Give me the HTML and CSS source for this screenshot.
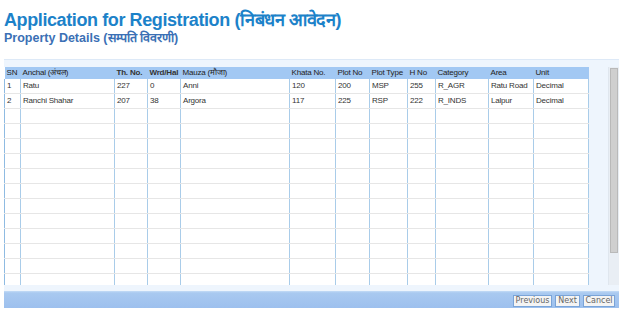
FILE: index.html
```html
<!DOCTYPE html>
<html lang="en">
<head>
    <meta charset="UTF-8">
    <title>Application for Registration</title>
    <link rel="stylesheet" href="styles.css">
</head>
<body>
    <div class="page-head">
        <h1>Application for Registration (निबंधन आवेदन)</h1>
        <h2>Property Details (सम्पति विवरणी)</h2>
    </div>
    <div class="panel">
        <div class="grid-area">
            <div class="grid">
                <table>
                    <colgroup>
                        <col style="width:16px"><col style="width:94px"><col style="width:33px"><col style="width:33px">
                        <col style="width:109px"><col style="width:46px"><col style="width:34px"><col style="width:38px">
                        <col style="width:28px"><col style="width:53px"><col style="width:45px"><col style="width:55px">
                    </colgroup>
                    <thead>
                        <tr>
                            <th>SN</th><th>Anchal (अंचल)</th><th class="bold">Th. No.</th><th class="bold">Wrd/Hal</th>
                            <th>Mauza (मौजा)</th><th>Khata No.</th><th>Plot No</th><th>Plot Type</th>
                            <th>H No</th><th>Category</th><th>Area</th><th>Unit</th>
                        </tr>
                    </thead>
                    <tbody>
                        <tr><td>1</td><td>Ratu</td><td>227</td><td>0</td><td>Anni</td><td>120</td><td>200</td><td>MSP</td><td>255</td><td>R_AGR</td><td>Ratu Road</td><td>Decimal</td></tr>
                        <tr><td>2</td><td>Ranchi Shahar</td><td>207</td><td>38</td><td>Argora</td><td>117</td><td>225</td><td>RSP</td><td>222</td><td>R_INDS</td><td>Lalpur</td><td>Decimal</td></tr>
                        <tr><td></td><td></td><td></td><td></td><td></td><td></td><td></td><td></td><td></td><td></td><td></td><td></td></tr>
                        <tr><td></td><td></td><td></td><td></td><td></td><td></td><td></td><td></td><td></td><td></td><td></td><td></td></tr>
                        <tr><td></td><td></td><td></td><td></td><td></td><td></td><td></td><td></td><td></td><td></td><td></td><td></td></tr>
                        <tr><td></td><td></td><td></td><td></td><td></td><td></td><td></td><td></td><td></td><td></td><td></td><td></td></tr>
                        <tr><td></td><td></td><td></td><td></td><td></td><td></td><td></td><td></td><td></td><td></td><td></td><td></td></tr>
                        <tr><td></td><td></td><td></td><td></td><td></td><td></td><td></td><td></td><td></td><td></td><td></td><td></td></tr>
                        <tr><td></td><td></td><td></td><td></td><td></td><td></td><td></td><td></td><td></td><td></td><td></td><td></td></tr>
                        <tr><td></td><td></td><td></td><td></td><td></td><td></td><td></td><td></td><td></td><td></td><td></td><td></td></tr>
                        <tr><td></td><td></td><td></td><td></td><td></td><td></td><td></td><td></td><td></td><td></td><td></td><td></td></tr>
                        <tr><td></td><td></td><td></td><td></td><td></td><td></td><td></td><td></td><td></td><td></td><td></td><td></td></tr>
                        <tr><td></td><td></td><td></td><td></td><td></td><td></td><td></td><td></td><td></td><td></td><td></td><td></td></tr>
                        <tr><td></td><td></td><td></td><td></td><td></td><td></td><td></td><td></td><td></td><td></td><td></td><td></td></tr>
                    </tbody>
                </table>
            </div>
            <div class="scroll-track"><div class="scroll-thumb"></div></div>
        </div>
        <div class="button-bar">
            <button class="btn-prev">Previous</button>
            <button class="btn-next">Next</button>
            <button class="btn-cancel">Cancel</button>
        </div>
    </div>
</body>
</html>
```

FILE: styles.css
```css
body {
    margin: 0;
    font-family: "Liberation Sans", Arial, sans-serif;
    background-color: #fff;
}
.page-head {
    padding: 9px 4px 0;
}
h1 {
    margin: 0;
    font-size: 18px;
    letter-spacing: -0.4px;
    line-height: 22px;
    font-weight: bold;
    color: #1c82c9;
}
h2 {
    margin: 0;
    font-size: 12.5px;
    line-height: 15px;
    font-weight: bold;
    color: #3b70b5;
}
.panel {
    margin: 13px 7px 0 4px;
    background-color: #eef5fd;
    border-top: 1px solid #dde9f7;
}
.grid-area {
    display: flex;
    padding: 7px 0 6px 0;
}
.grid {
    width: 585px;
    height: 218px;
    overflow: hidden;
    background-color: #fff;
}
table {
    border-collapse: collapse;
    table-layout: fixed;
    width: 585px;
    font-size: 8px;
    letter-spacing: -0.2px;
    color: #333;
}
th {
    height: 12px;
    padding: 0 2px;
    background-color: #a2c8f3;
    font-weight: normal;
    text-align: left;
    white-space: nowrap;
    overflow: hidden;
    line-height: 12px;
    color: #222;
}
th.bold {
    font-weight: bold;
    color: #333;
}
td {
    height: 14px;
    padding: 0 2px;
    border-left: 1px solid #a9cce9;
    border-bottom: 1px solid #e6e6e6;
    white-space: nowrap;
    overflow: hidden;
    line-height: 14px;
}
td:first-child {
    border-left: 1px solid #8fbbe2;
}
td:last-child {
    border-right: 1px solid #a9cce9;
}
.scroll-track {
    width: 10px;
    height: 218px;
    margin-left: 19px;
    background-color: #e9eef4;
    border-left: 1px solid #dfe6ee;
}
.scroll-thumb {
    width: 8px;
    height: 185px;
    margin: 1px 0 0 1px;
    background-color: #cfcfcf;
    border: 1px solid #b9b9b9;
    box-sizing: border-box;
}
.button-bar {
    display: flex;
    justify-content: flex-end;
    gap: 3px;
    height: 17px;
    padding: 4px 4px 0 0;
    box-sizing: border-box;
    background: linear-gradient(to bottom, #c4dcf6 0, #a9c9f0 2px, #9dc0ee 100%);
}
button {
    height: 12px;
    padding: 0;
    box-sizing: border-box;
    font-family: "DejaVu Sans", Tahoma, sans-serif;
    font-size: 8px;
    line-height: 10px;
    text-align: center;
    color: #666;
    background-color: #f4f4f4;
    border: 1px solid #7aa4d8;
}
.btn-prev {
    width: 39px;
}
.btn-next {
    width: 25px;
}
.btn-cancel {
    width: 32px;
}
```
